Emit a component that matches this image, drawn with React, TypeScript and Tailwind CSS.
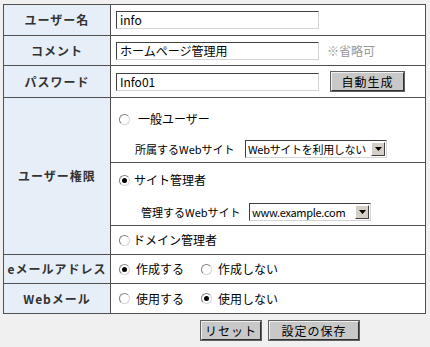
import React from "react";

const font = { fontFamily: '"Noto Sans CJK JP", "Noto Sans", sans-serif' };

const Radio = ({ checked }: { checked?: boolean }) => (
  <span className="inline-flex w-[11px] h-[11px] rounded-full bg-white border border-[#808080] border-b-[#d4d4d4] border-r-[#d4d4d4] items-center justify-center shrink-0">
    {checked && <span className="w-[5px] h-[5px] rounded-full bg-black" />}
  </span>
);

const TextBox = ({ value, className }: { value: string; className?: string }) => (
  <div
    className={`h-[18px] bg-white border border-[#404040] border-b-[#d4d4d4] border-r-[#d4d4d4] px-[3px] flex items-center text-[12px] text-black leading-none ${className ?? ""}`}
  >
    {value}
  </div>
);

const Select = ({ value, className }: { value: string; className?: string }) => (
  <div className={`h-[18px] shrink-0 bg-white border border-[#404040] border-b-[#d4d4d4] border-r-[#d4d4d4] flex items-center ${className ?? ""}`}>
    <span className="flex-1 px-[2px] text-[11px] tracking-[-0.3px] leading-none text-black whitespace-nowrap">{value}</span>
    <span className="w-[14px] h-[14px] shrink-0 mr-[1px] bg-[#d4d0c8] border border-white border-b-[#404040] border-r-[#404040] flex items-center justify-center">
      <svg width="7" height="4" viewBox="0 0 7 4"><polygon points="0,0 7,0 3.5,4" fill="#000" /></svg>
    </span>
  </div>
);

const Button = ({ label, className }: { label: string; className?: string }) => (
  <div
    className={`h-[19px] bg-[#c8c8c8] border border-[#f0f0f0] border-b-[#303030] border-r-[#303030] outline outline-1 outline-[#606060] flex items-center justify-center text-[12px] tracking-[1px] text-black leading-none ${className ?? ""}`}
  >
    {label}
  </div>
);

const Label = ({ children, rowSpan, h }: { children: React.ReactNode; rowSpan?: number; h: string }) => (
  <td rowSpan={rowSpan} className={`w-[107px] ${h} bg-[#e6eef8] border border-[#505050] text-center align-middle text-[12px] font-bold text-[#333] tracking-[1px]`}>
    {children}
  </td>
);

export default function App() {
  return (
    <div className="w-[430px] h-[347px] bg-[#f0f0f0] pt-[4px] pl-[3px]" style={font}>
      <table className="border-collapse w-[423px] bg-white border border-[#404040]">
        <tbody>
          <tr>
            <Label h="h-[31px]">ユーザー名</Label>
            <td className="border border-[#505050] pl-[5px]">
              <TextBox value="info" className="w-[203px]" />
            </td>
          </tr>
          <tr>
            <Label h="h-[30px]">コメント</Label>
            <td className="border border-[#505050] pl-[5px]">
              <div className="flex items-center">
                <TextBox value="ホームページ管理用" className="w-[203px]" />
                <span className="ml-[8px] text-[12px] text-[#999]">※省略可</span>
              </div>
            </td>
          </tr>
          <tr>
            <Label h="h-[32px]">パスワード</Label>
            <td className="border border-[#505050] pl-[5px]">
              <div className="flex items-center">
                <TextBox value="Info01" className="w-[203px]" />
                <Button label="自動生成" className="ml-[12px] w-[73px]" />
              </div>
            </td>
          </tr>
          <tr>
            <Label rowSpan={3} h="h-[157px]">ユーザー権限</Label>
            <td className="h-[65px] border border-[#505050] pl-[8px] text-[12px] text-black align-top">
              <div className="flex items-center gap-[8px] mt-[12px]">
                <Radio />
                <span>一般ユーザー</span>
              </div>
              <div className="flex items-center mt-[12px] ml-[16px]">
                <span className="w-[110px] shrink-0 whitespace-nowrap text-[11px]">所属するWebサイト</span>
                <Select value="Webサイトを利用しない" className="w-[142px]" />
              </div>
            </td>
          </tr>
          <tr>
            <td className="h-[63px] border border-[#505050] pl-[8px] text-[12px] text-black align-top">
              <div className="flex items-center gap-[4px] mt-[8px]">
                <Radio checked />
                <span>サイト管理者</span>
              </div>
              <div className="flex items-center mt-[14px] ml-[22px]">
                <span className="w-[108px] shrink-0 whitespace-nowrap text-[11px]">管理するWebサイト</span>
                <Select value="www.example.com" className="w-[122px]" />
              </div>
            </td>
          </tr>
          <tr>
            <td className="h-[29px] border border-[#505050] pl-[8px] text-[12px] text-black">
              <div className="flex items-center gap-[3px]">
                <Radio />
                <span>ドメイン管理者</span>
              </div>
            </td>
          </tr>
          <tr>
            <Label h="h-[29px]">eメールアドレス</Label>
            <td className="border border-[#505050] pl-[8px] text-[12px] text-black">
              <div className="flex items-center">
                <Radio checked />
                <span className="ml-[6px] w-[65px]">作成する</span>
                <Radio />
                <span className="ml-[6px]">作成しない</span>
              </div>
            </td>
          </tr>
          <tr>
            <Label h="h-[30px]">Webメール</Label>
            <td className="border border-[#505050] pl-[8px] text-[12px] text-black">
              <div className="flex items-center">
                <Radio />
                <span className="ml-[6px] w-[65px]">使用する</span>
                <Radio checked />
                <span className="ml-[6px]">使用しない</span>
              </div>
            </td>
          </tr>
        </tbody>
      </table>
      <div className="flex pl-[198px] mt-[7px] gap-[8px]">
        <Button label="リセット" className="w-[60px]" />
        <Button label="設定の保存" className="w-[90px]" />
      </div>
    </div>
  );
}
